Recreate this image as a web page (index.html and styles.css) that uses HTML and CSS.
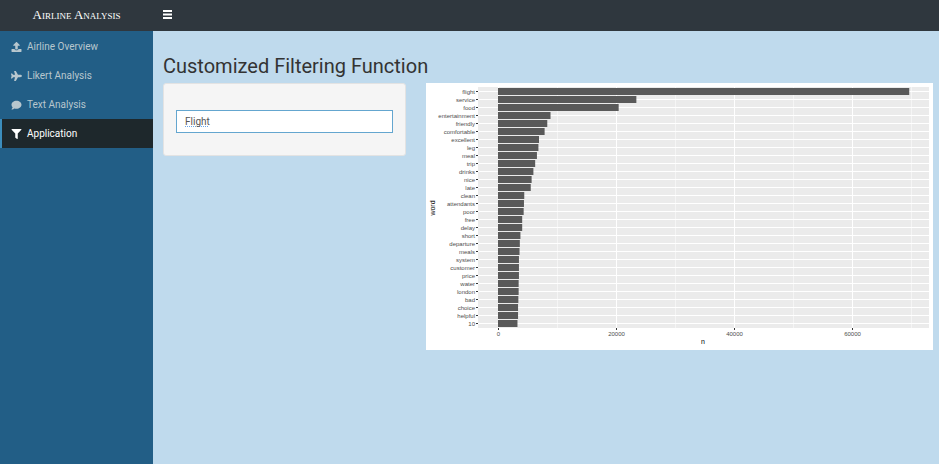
FILE: index.html
```html
<!DOCTYPE html>
<html lang="en">
<head>
<meta charset="utf-8">
<title>Airline Analysis</title>
<link rel="stylesheet" href="styles.css">
</head>
<body>
<header class="topbar">
  <a class="brand" href="#">Airline Analysis</a>
  <button class="toggle" type="button" aria-label="Toggle navigation">
    <svg viewBox="0 0 9 9" width="9" height="9"><path d="M0 1h9M0 4.500h9M0 8h9" stroke="currentColor" stroke-width="2"/></svg>
  </button>
</header>
<div class="layout">
  <nav class="sidebar">
    <a class="item" href="#">
      <svg class="icon" viewBox="0 0 512 512"><path d="M296 384h-80c-13 0-24-11-24-24V192h-88c-18 0-27-21-14-34L242 6c8-8 20-8 28 0l152 152c13 13 4 34-14 34h-88v168c0 13-11 24-24 24zm216-8v112c0 13-11 24-24 24H24c-13 0-24-11-24-24V376c0-13 11-24 24-24h136v8c0 31 25 56 56 56h80c31 0 56-25 56-56v-8h136c13 0 24 11 24 24z"/></svg>
      <span>Airline Overview</span></a>
    <a class="item" href="#">
      <svg class="icon" viewBox="0 0 576 512"><path d="M480 192H365L260 8c-3-5-8-8-14-8h-66c-10 0-18 10-15 20l49 172H112l-43-58c-3-4-8-6-13-6H16c-10 0-18 10-16 20l32 108L0 364c-2 10 6 20 16 20h40c5 0 10-2 13-6l43-58h102l-49 172c-3 10 5 20 15 20h66c6 0 11-3 14-8l105-184h115c35 0 96-29 96-64s-61-64-96-64z"/></svg>
      <span>Likert Analysis</span></a>
    <a class="item" href="#">
      <svg class="icon" viewBox="0 0 512 512"><path d="M256 32C115 32 0 125 0 240c0 50 21 95 57 131-13 50-54 95-55 95-2 3-3 7-1 10s4 4 7 4c66 0 116-32 140-51 33 12 69 19 108 19 141 0 256-93 256-208S397 32 256 32z"/></svg>
      <span>Text Analysis</span></a>
    <a class="item active" href="#" aria-current="page">
      <svg class="icon" viewBox="0 0 512 512"><path d="M488 0H24C3 0-8 26 7 41l185 185v206c0 8 4 15 10 20l80 56c16 11 38 0 38-20V226L505 41c15-15 4-41-17-41z"/></svg>
      <span>Application</span></a>
  </nav>
  <main class="content">
    <h1 class="title">Customized Filtering Function</h1>
    <div class="row">
      <form class="well">
        <input class="field" type="text" value="Flight" aria-label="Word">
      </form>
      <svg class="chart" viewBox="0 0 507 267" role="img" aria-label="Word counts"></svg>
    </div>
  </main>
</div>
<script src="chart.js"></script>
</body>
</html>
```
FILE: styles.css
```css
* {
  box-sizing: border-box;
}

body {
  margin: 0;
  min-height: 100vh;
  display: flex;
  flex-direction: column;
  background: #bfdaed;
  color: #333;
  font-family: Roboto, "Liberation Sans", sans-serif;
  font-size: 10px;
}

.topbar {
  display: flex;
  align-items: center;
  height: 31px;
  padding-bottom: 2px;
  background: #2f373e;
}

.brand {
  width: 153px;
  color: #fff;
  font-family: "Liberation Serif", serif;
  font-size: 13px;
  font-variant: small-caps;
  line-height: 18px;
  text-align: center;
  text-decoration: none;
}

.toggle {
  display: flex;
  padding: 0 10px;
  border: 0;
  background: none;
  color: #fff;
}

.layout {
  display: flex;
  flex: 1;
}

.sidebar {
  flex: none;
  width: 153px;
  padding-top: 1px;
  background: #225e86;
}

.item {
  display: flex;
  align-items: center;
  gap: 5px;
  height: 29px;
  padding-left: 9px;
  border-left: 2px solid transparent;
  color: #b8c7ce;
  text-decoration: none;
}

.item.active {
  border-left-color: #3c8dbc;
  background: #1e282c;
  color: #fff;
}

.icon {
  width: 11px;
  height: 10px;
  fill: currentColor;
}

.content {
  flex: 1;
  min-width: 0;
  padding: 22px 6px 10px 10px;
}

.title {
  margin: 0 0 4px;
  font-size: 20px;
  font-weight: 400;
  line-height: 26px;
}

.row {
  display: grid;
  grid-template-columns: 243fr 507fr;
  gap: 20px;
  align-items: start;
}

.well {
  padding: 26px 12px 22px;
  border: 1px solid #e3e3e3;
  border-radius: 3px;
  background: #f5f5f5;
}

.field {
  display: block;
  width: 100%;
  height: 23px;
  padding: 0 8px;
  border: 1px solid #64a6cf;
  background: repeating-linear-gradient(90deg, #6ba6e8 0 1px, #fff 1px 2px) 8px 15px / 24px 1px no-repeat #fff;
  color: #555;
  font: inherit;
}

.chart {
  display: block;
  width: 100%;
  background: #fff;
  font-family: "Liberation Sans", sans-serif;
}

.panel {
  fill: #ebebeb;
}

.grid {
  stroke: #fff;
  stroke-width: 1;
}

.grid.minor {
  opacity: 0.5;
}

.bar {
  fill: #595959;
}

.tick {
  stroke: #333;
  stroke-width: 1;
}

.label {
  fill: #4d4d4d;
  font-size: 6px;
}

.word {
  text-anchor: end;
}

.number,
.axis {
  text-anchor: middle;
}

.axis {
  fill: #000;
  font-size: 7px;
}
```
FILE: chart.js
```js
const counts = [
  ["flight", 69700], ["service", 23450], ["food", 20450], ["entertainment", 8900],
  ["friendly", 8350], ["comfortable", 7900], ["excellent", 6950], ["leg", 6850],
  ["meal", 6600], ["trip", 6300], ["drinks", 6000], ["nice", 5700], ["late", 5550],
  ["clean", 4450], ["attendants", 4400], ["poor", 4350], ["free", 4100], ["delay", 4100],
  ["short", 3800], ["departure", 3700], ["meals", 3650], ["system", 3550],
  ["customer", 3550], ["price", 3550], ["water", 3500], ["london", 3500],
  ["bad", 3450], ["choice", 3400], ["helpful", 3400], ["10", 3300]
];
const chart = document.querySelector(".chart");
const panel = { left: 52, right: 503, top: 4, bottom: 245 };
const zero = 72;
const scale = 118 / 20000;
const rowHeight = 8;

function add(name, className, attributes, text) {
  const node = document.createElementNS("http://www.w3.org/2000/svg", name);
  node.setAttribute("class", className);
  for (const key in attributes) node.setAttribute(key, attributes[key]);
  if (text) node.textContent = text;
  chart.append(node);
}

add("rect", "panel", {
  x: panel.left, y: panel.top,
  width: panel.right - panel.left, height: panel.bottom - panel.top
});

for (let n = 0; n <= 70000; n += 10000) {
  const x = zero + n * scale + 0.5;
  const major = n % 20000 === 0;
  add("line", major ? "grid" : "grid minor", { x1: x, x2: x, y1: panel.top, y2: panel.bottom });
  if (major) {
    add("line", "tick", { x1: x, x2: x, y1: panel.bottom, y2: panel.bottom + 2 });
    add("text", "label number", { x, y: 253 }, String(n));
  }
}

counts.forEach(([word, count], index) => {
  const y = 8.5 + index * rowHeight;
  add("line", "grid", { x1: panel.left, x2: panel.right, y1: y, y2: y });
  add("rect", "bar", { x: zero, y: y - 3.5, width: count * scale, height: 7 });
  add("line", "tick", { x1: panel.left - 2, x2: panel.left, y1: y, y2: y });
  add("text", "label word", { x: 49, y: y + 2 }, word);
});

add("text", "axis", { x: 277, y: 261 }, "n");
add("text", "axis", { transform: "translate(9 125) rotate(-90)" }, "word");
```
